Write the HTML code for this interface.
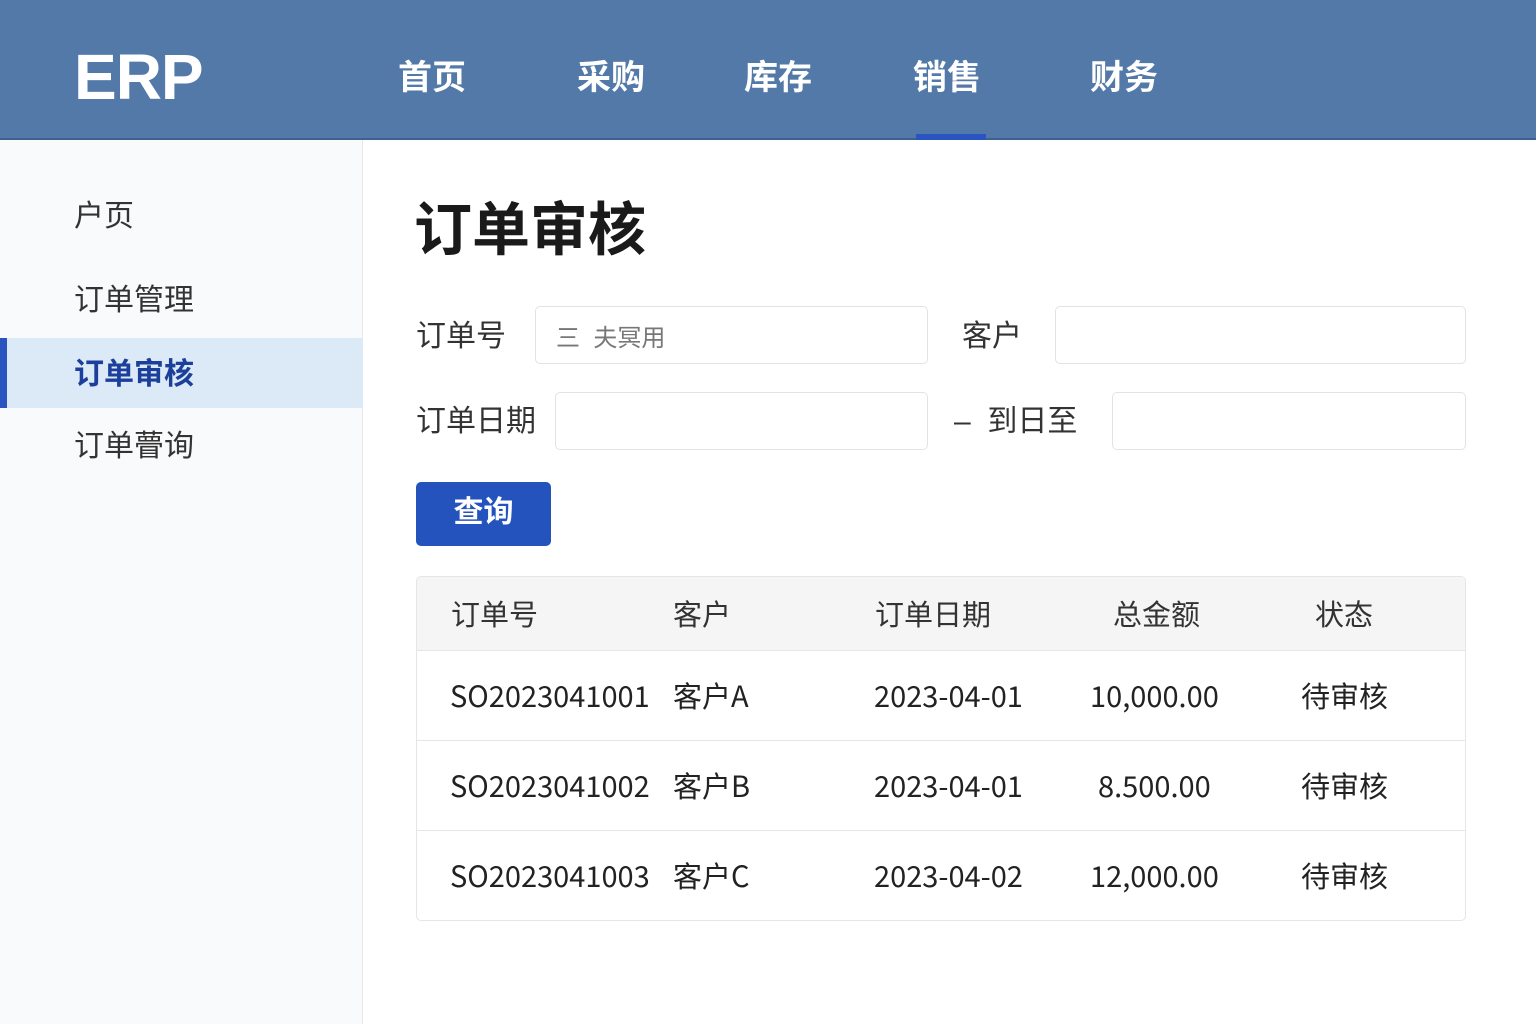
<!DOCTYPE html>
<html><head><meta charset="utf-8"><style>
*{margin:0;padding:0;box-sizing:border-box}
body{width:1536px;height:1024px;overflow:hidden;background:#fff;font-family:"Liberation Sans","Noto Sans CJK SC",sans-serif;color:#222;position:relative}
.hdr{position:absolute;left:0;top:0;width:1536px;height:140px;background:#5279a8;border-bottom:2px solid #3d6290}
.logo{position:absolute;left:74px;top:40px;font-size:64px;font-weight:bold;color:#fff;letter-spacing:-1px}
.nav{position:absolute;top:50px;font-size:34px;font-weight:bold;color:#fff}
.ul{position:absolute;left:916px;top:134px;width:70px;height:6px;background:#2a55c0}
.side{position:absolute;left:0;top:140px;width:363px;height:884px;background:#f9fafb;border-right:1px solid #e8e8e8}
.si{position:absolute;left:74px;font-size:30px;color:#333}
.act{position:absolute;left:0;top:338px;width:363px;height:70px;background:#dce9f6;border-left:7px solid #2a55c0}
.t{position:absolute;font-size:30px;color:#333}
.in{position:absolute;height:58px;border:1px solid #e3e3e3;border-radius:5px;background:#fff}
.btn{position:absolute;left:416px;top:482px;width:135px;height:64px;background:#2453be;border-radius:5px;color:#fff;font-size:30px;font-weight:bold;text-align:center;line-height:62px}
.tbl{position:absolute;left:416px;top:576px;width:1050px;height:345px;border:1px solid #e6e6e6;border-radius:5px;overflow:hidden}
.th{position:absolute;left:0;top:0;width:100%;height:74px;background:#f5f5f5;border-bottom:1px solid #e6e6e6}
.row{position:absolute;left:0;width:100%;height:90px;border-bottom:1px solid #e6e6e6}
.c{position:absolute;font-size:29px;color:#222;font-family:"Noto Sans CJK SC",sans-serif;line-height:1}
</style></head><body>
<div class="hdr">
<div class="logo">ERP</div>
<div class="nav" style="left:398px">首页</div>
<div class="nav" style="left:577px">采购</div>
<div class="nav" style="left:744px">库存</div>
<div class="nav" style="left:913px">销售</div>
<div class="nav" style="left:1090px">财务</div>
<div class="ul"></div>
</div>
<div class="side">
<div class="si" style="top:51px">户页</div>
<div class="si" style="top:135px">订单管理</div>
<div class="si" style="top:281px">订单瞢询</div>
</div>
<div class="act"></div>
<div class="si" style="top:349px;color:#1c3f9c;font-weight:bold">订单审核</div>

<div class="t" style="left:414px;top:183px;font-size:58px;font-weight:bold;color:#1a1a1a">订单审核</div>
<div class="t" style="left:416px;top:311px">订单号</div>
<div class="in" style="left:535px;top:306px;width:393px"><span style="position:absolute;left:20px;top:11px;font-size:24px;color:#777">三&nbsp; 夫冥用</span></div>
<div class="t" style="left:962px;top:311px">客户</div>
<div class="in" style="left:1055px;top:306px;width:411px"></div>
<div class="t" style="left:416px;top:396px">订单日期</div>
<div class="in" style="left:555px;top:392px;width:373px"></div>
<div class="t" style="left:954px;top:396px">–&nbsp; 到日至</div>
<div class="in" style="left:1112px;top:392px;width:354px"></div>
<div class="btn">查询</div>

<div class="tbl">
<div class="th">
<div class="c" style="left:34px;top:22px;color:#333">订单号</div>
<div class="c" style="left:256px;top:22px;color:#333">客户</div>
<div class="c" style="left:458px;top:22px;color:#333">订单日期</div>
<div class="c" style="left:696px;top:22px;color:#333">总金额</div>
<div class="c" style="left:898px;top:22px;color:#333">状态</div>
</div>
<div class="row" style="top:74px">
<div class="c" style="left:33px;top:30px">SO2023041001</div><div class="c" style="left:256px;top:30px">客户A</div><div class="c" style="left:457px;top:30px">2023-04-01</div><div class="c" style="left:673px;top:30px">10,000.00</div><div class="c" style="left:884px;top:30px">待审核</div>
</div>
<div class="row" style="top:164px">
<div class="c" style="left:33px;top:30px">SO2023041002</div><div class="c" style="left:256px;top:30px">客户B</div><div class="c" style="left:457px;top:30px">2023-04-01</div><div class="c" style="left:681px;top:30px">8.500.00</div><div class="c" style="left:884px;top:30px">待审核</div>
</div>
<div class="row" style="top:254px;border-bottom:none">
<div class="c" style="left:33px;top:30px">SO2023041003</div><div class="c" style="left:256px;top:30px">客户C</div><div class="c" style="left:457px;top:30px">2023-04-02</div><div class="c" style="left:673px;top:30px">12,000.00</div><div class="c" style="left:884px;top:30px">待审核</div>
</div>
</div>
</body></html>
